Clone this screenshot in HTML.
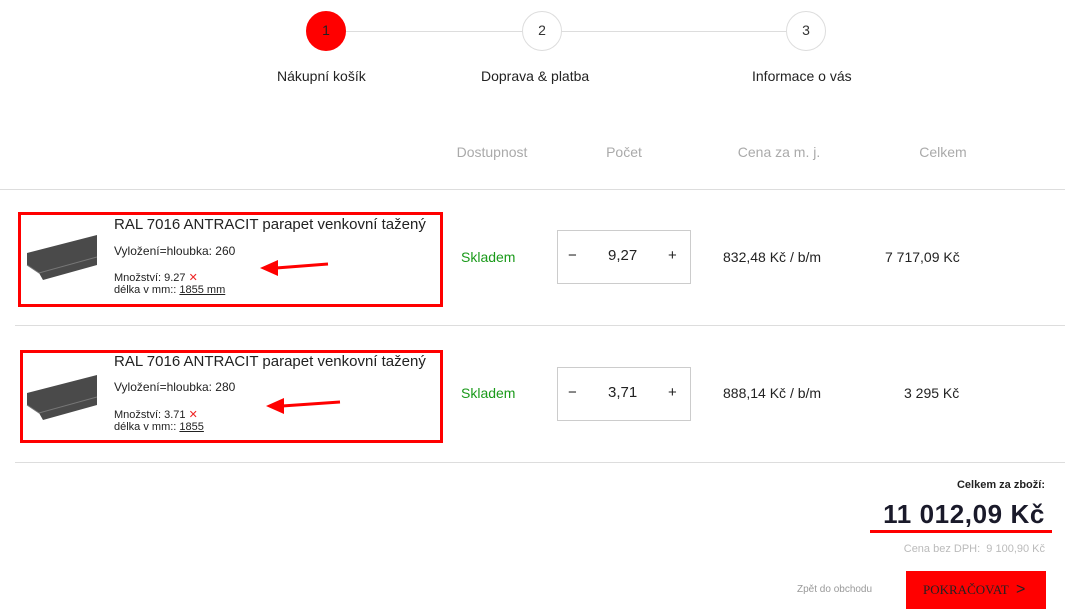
<!DOCTYPE html>
<html><head><meta charset="utf-8"><style>
*{margin:0;padding:0;box-sizing:border-box}
body{width:1069px;height:616px;background:#fff;font-family:"Liberation Sans","DejaVu Sans",sans-serif;color:#222;position:relative;overflow:hidden}
.a{position:absolute;white-space:nowrap}
.c{position:absolute;width:40px;height:40px;border-radius:50%;border:1.5px solid #ddd;background:#fff;text-align:center;line-height:37px;font-size:14px;color:#333}
.hl{position:absolute;height:1px;background:#ddd}
.h{position:absolute;top:144px;font-size:14px;color:#aaa;transform:translateX(-50%)}
.box{position:absolute;border:3px solid #f00}
.img{position:absolute;width:72px;height:60px}
.t{font-size:15px;color:#222}
.qty{position:absolute;width:134px;height:54px;border:1px solid #ccc}
.qty span{position:absolute;top:16px;font-size:15px}
.grn{color:#1a9a1a;font-size:14px}
</style></head><body>
<div class="hl" style="left:330px;top:31px;width:480px;background:#ddd"></div>
<div class="c" style="left:306px;top:11px;background:#f00;border-color:#f00;color:#222">1</div>
<div class="c" style="left:522px;top:11px">2</div>
<div class="c" style="left:786px;top:11px">3</div>
<div class="a" style="left:277px;top:68px;font-size:14px">Nákupní košík</div>
<div class="a" style="left:481px;top:68px;font-size:14px">Doprava &amp; platba</div>
<div class="a" style="left:752px;top:68px;font-size:14px">Informace o vás</div>

<div class="h" style="left:492px">Dostupnost</div>
<div class="h" style="left:624px">Počet</div>
<div class="h" style="left:779px">Cena za m. j.</div>
<div class="h" style="left:943px">Celkem</div>
<div class="hl" style="left:0;top:189px;width:1065px"></div>
<div class="hl" style="left:15px;top:325px;width:1050px"></div>
<div class="hl" style="left:15px;top:462px;width:1050px"></div>

<!-- row 1 -->
<div class="box" style="left:18px;top:212px;width:425px;height:95px"></div>
<svg class="img" style="left:25px;top:225px" viewBox="0 0 72 60"><path d="M2 28 L72 10 L72 40 L18 55 L14 48 L2 40Z" fill="#4a4a4a"/><path d="M2 40 L14 48 L72 32" stroke="#777" fill="none"/></svg>
<div class="a t" style="left:114px;top:216px">RAL 7016 ANTRACIT parapet venkovní tažený</div>
<div class="a" style="left:114px;top:244px;font-size:12px">Vyložení=hloubka: 260</div>
<div class="a" style="left:114px;top:272px;font-size:11px;line-height:12px">Množství: 9.27 <span style="color:#e22">✕</span><br>délka v mm:: <u>1855 mm</u></div>
<svg class="a" style="left:258px;top:256px" width="72" height="20"><path d="M70 8 L18 12" stroke="#f00" stroke-width="3"/><path d="M2 12 L20 4 L20 20Z" fill="#f00"/></svg>
<div class="a grn" style="left:461px;top:249px">Skladem</div>
<div class="qty" style="left:557px;top:230px"><span style="left:10px">−</span><span style="left:50px">9,27</span><span style="left:110px">+</span></div>
<div class="a" style="left:723px;top:249px;font-size:14px">832,48 Kč / b/m</div>
<div class="a" style="left:885px;top:249px;font-size:14px">7 717,09 Kč</div>

<!-- row 2 -->
<div class="box" style="left:20px;top:350px;width:423px;height:93px"></div>
<svg class="img" style="left:25px;top:365px" viewBox="0 0 72 60"><path d="M2 28 L72 10 L72 40 L18 55 L14 48 L2 40Z" fill="#4a4a4a"/><path d="M2 40 L14 48 L72 32" stroke="#777" fill="none"/></svg>
<div class="a t" style="left:114px;top:353px">RAL 7016 ANTRACIT parapet venkovní tažený</div>
<div class="a" style="left:114px;top:380px;font-size:12px">Vyložení=hloubka: 280</div>
<div class="a" style="left:114px;top:409px;font-size:11px;line-height:12px">Množství: 3.71 <span style="color:#e22">✕</span><br>délka v mm:: <u>1855</u></div>
<svg class="a" style="left:264px;top:394px" width="78" height="20"><path d="M76 8 L18 12" stroke="#f00" stroke-width="3"/><path d="M2 12 L20 4 L20 20Z" fill="#f00"/></svg>
<div class="a grn" style="left:461px;top:385px">Skladem</div>
<div class="qty" style="left:557px;top:367px"><span style="left:10px">−</span><span style="left:50px">3,71</span><span style="left:110px">+</span></div>
<div class="a" style="left:723px;top:385px;font-size:14px">888,14 Kč / b/m</div>
<div class="a" style="left:904px;top:385px;font-size:14px">3 295 Kč</div>

<!-- totals -->
<div class="a" style="right:24px;top:479px;font-size:11px;font-weight:bold">Celkem za zboží:</div>
<div class="a" style="right:24px;top:499px;font-size:26px;font-weight:bold;color:#1a1a2a;letter-spacing:0.6px">11 012,09 Kč</div>
<div class="a" style="left:870px;top:530px;width:182px;height:3px;background:#f00"></div>
<div class="a" style="right:24px;top:543px;font-size:11px;color:#bbb">Cena bez DPH:&nbsp; 9 100,90 Kč</div>
<div class="a" style="left:797px;top:584px;font-size:10px;color:#999">Zpět do obchodu</div>
<div class="a" style="left:906px;top:571px;width:140px;height:38px;background:#f00;color:#222;font-family:'Liberation Serif',serif;font-size:13px;line-height:38px;padding-left:17px">POKRAČOVAT <span style="position:absolute;left:110px;font-family:'Liberation Sans';font-size:16px">&gt;</span></div>
</body></html>
